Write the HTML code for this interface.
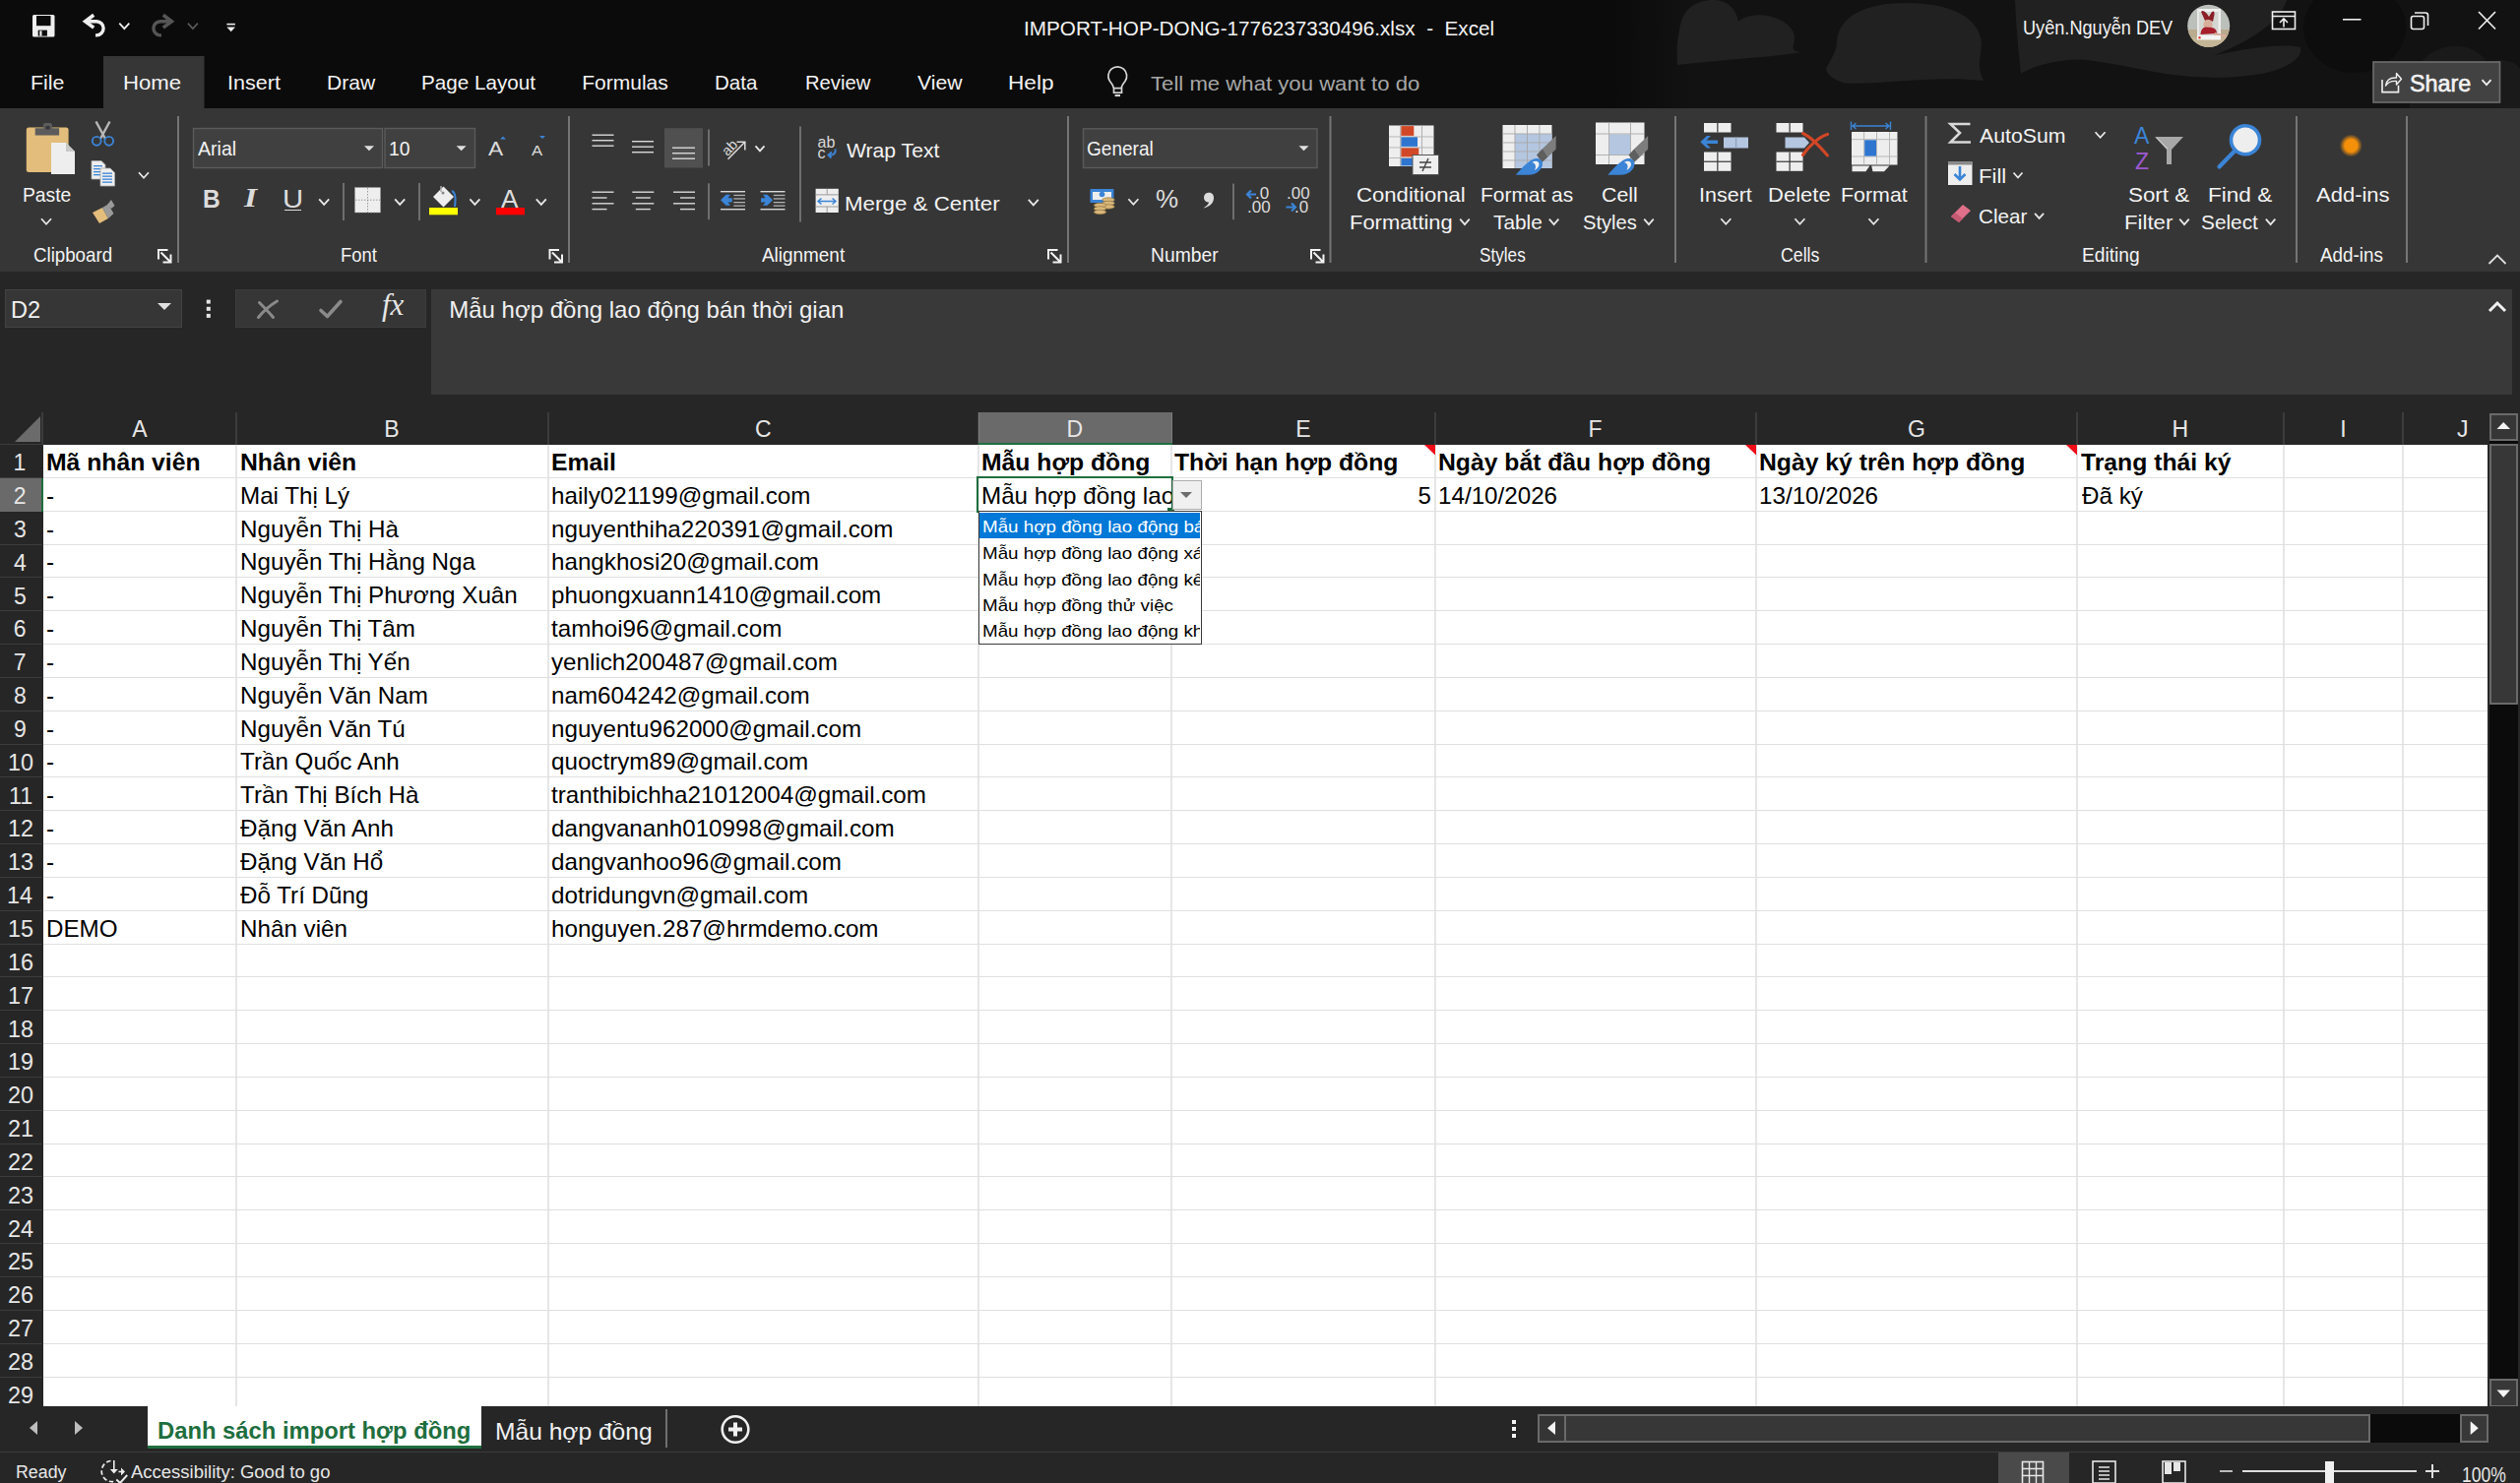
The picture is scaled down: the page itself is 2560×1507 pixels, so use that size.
<!DOCTYPE html>
<html><head><meta charset="utf-8"><style>
html,body{margin:0;padding:0}
body{width:2560px;height:1507px;overflow:hidden;position:relative;background:#0b0b0b;font-family:"Liberation Sans",sans-serif}
.r{position:absolute}
.t{position:absolute;white-space:pre}
</style></head><body>
<div class="r" style="left:0;top:0;width:2560px;height:110px;background:#0b0b0b;overflow:hidden"><svg class="r" style="left:0;top:0" width="2560" height="110"><defs><linearGradient id="nz" x1="0" x2="1" y1="0" y2="0"><stop offset="0" stop-color="#121212" stop-opacity="0"/><stop offset="1" stop-color="#121212"/></linearGradient></defs><rect x="1640" y="0" width="80" height="110" fill="url(#nz)"/><rect x="1720" y="0" width="840" height="110" fill="#121212"/><ellipse cx="2392" cy="28" rx="52" ry="46" fill="#0d0d0d"/><path d="M1704 66 C1703 50 1704 38 1706 32 C1708 10 1722 0 1740 0 C1756 0 1764 10 1766 22 C1772 16 1784 14 1796 16 C1814 20 1824 30 1823 40 C1822 48 1818 52 1830 53 C1800 58 1760 60 1704 66 Z" fill="#212121"/><path d="M1855 70 C1858 62 1866 54 1866 42 C1868 16 1896 3 1936 3 C1986 3 2012 20 2013 45 C2012 60 2008 66 2015 82 C1960 76 1900 88 1872 84 C1862 80 1856 76 1855 70 Z" fill="#212121"/><path d="M2047 0 L2323 0 C2318 20 2290 40 2250 56 C2290 48 2320 44 2337 48 C2340 60 2320 72 2290 76 C2260 80 2240 80 2200 75 C2160 68 2120 58 2100 61 C2075 64 2060 70 2053 75 C2050 50 2048 25 2047 0 Z" fill="#212121"/><path d="M2448 110 C2446 80 2456 58 2478 50 C2498 42 2520 50 2526 64 C2540 58 2556 62 2560 70 L2560 110 Z" fill="#1a1a1a"/><path d="M33 16.5 Q33 15 34.5 15 H54 Q55.5 15 55.5 16.5 V36 Q55.5 37.5 54 37.5 H34.5 Q33 37.5 33 36 Z" fill="#eeeeee"/><rect x="37" y="16" width="14.5" height="10.2" fill="#0b0b0b"/><rect x="38.7" y="30.6" width="9.2" height="6" fill="#0b0b0b"/><rect x="40.3" y="31.3" width="2.2" height="5.3" fill="#eeeeee"/><path d="M88 21.7 H98 A7.1 7.1 0 0 1 98 35.9 H97" stroke="#eeeeee" stroke-width="3.4" fill="none"/><path d="M95.2 15.3 L86.6 21.7 L95.2 28.1" stroke="#eeeeee" stroke-width="3.6" fill="none" stroke-linejoin="miter"/><path d="M121.3 23.65 L126.3 29.15 L131.3 23.65" stroke="#eeeeee" stroke-width="1.8" fill="none"/><path d="M173 21.7 H163 A7.1 7.1 0 0 0 163 35.9 H164" stroke="#555" stroke-width="3.4" fill="none"/><path d="M165.8 15.3 L174.4 21.7 L165.8 28.1" stroke="#555" stroke-width="3.6" fill="none" stroke-linejoin="miter"/><path d="M190.9 23.65 L195.9 29.15 L200.9 23.65" stroke="#555" stroke-width="1.8" fill="none"/><rect x="230.4" y="23.8" width="8.5" height="1.6" fill="#eeeeee"/><polygon points="230.4,27.6 239,27.6 234.7,32.3" fill="#eeeeee"/><rect x="2308.5" y="12" width="23" height="17.5" stroke="#eeeeee" stroke-width="1.6" fill="none"/><path d="M2308.5 16.5 H2331.5 M2320 27.5 V19.5 M2316 23 L2320 19 L2324 23" stroke="#eeeeee" stroke-width="1.6" fill="none"/><rect x="2380" y="19" width="18.5" height="1.6" fill="#eeeeee"/><rect x="2449.5" y="16.5" width="13" height="13" rx="2" stroke="#eeeeee" stroke-width="1.6" fill="none"/><path d="M2453 13 H2464 Q2466.5 13 2466.5 15.5 V26" stroke="#eeeeee" stroke-width="1.6" fill="none"/><path d="M2518 12 L2535 29.5 M2535 12 L2518 29.5" stroke="#eeeeee" stroke-width="1.7"/><defs><clipPath id="avc"><circle cx="2243.7" cy="26.3" r="21.5"/></clipPath></defs><g clip-path="url(#avc)"><rect x="2220" y="3" width="48" height="48" fill="#bcc0ba"/><rect x="2220" y="30" width="48" height="20" fill="#b9ab8e"/><rect x="2220" y="38" width="48" height="12" fill="#c4b596"/><rect x="2232" y="9" width="24" height="31" fill="#d4d6d2"/><rect x="2232" y="9" width="24" height="3" fill="#f0f0f0"/><rect x="2253.5" y="9" width="2.5" height="31" fill="#eeeeee"/><rect x="2232" y="9" width="2" height="31" fill="#e8e8e8"/><path d="M2236 12 Q2238 9 2242 14 L2244 17 L2247 12 Q2250 10 2249.5 15 L2248 22 Q2244 19 2240 21 Z" fill="#8a1f28"/><ellipse cx="2243" cy="25" rx="4.6" ry="5" fill="#d8ae9b"/><path d="M2235.5 35 Q2236 27.5 2241 27.5 L2247 28 Q2252 29 2252 34 Z" fill="#a61e2a"/><path d="M2250 33 L2263 36 L2262 38 L2249 36 Z" fill="#d8ae9b"/><rect x="2232" y="36" width="24" height="4.5" fill="#f4f4f4"/><circle cx="2234.5" cy="38.3" r="1.2" fill="#e04030"/></g><path d="M1131.3 89.3 C1130.5 85.5 1129 84.5 1127.5 82.5 A9.4 9.4 0 1 1 1143 82.5 C1141.5 84.5 1140 85.5 1139.2 89.3" stroke="#d6d6d6" stroke-width="1.7" fill="none"/><rect x="1131.5" y="89.6" width="8" height="4.6" stroke="#d6d6d6" stroke-width="1.7" fill="none"/><rect x="1132.6" y="96" width="5.4" height="2.1" fill="#d6d6d6"/><rect x="2411" y="63" width="128.5" height="41" fill="#424242" stroke="#6e6e6e" stroke-width="1.6"/><path d="M2420 81 V93.6 H2436.5 V86.7" stroke="#f0f0f0" stroke-width="1.6" fill="none"/><path d="M2423.5 87 C2424.5 81 2429 78.5 2434.5 79 V74.5 L2439.5 80.2 L2434.5 86 V82.5 C2430 82 2426 83.5 2423.5 87 Z" stroke="#f0f0f0" stroke-width="1.4" fill="none" stroke-linejoin="round"/><path d="M2521.5 81.1 L2526 86.1 L2530.5 81.1" stroke="#f0f0f0" stroke-width="1.8" fill="none"/><rect x="105" y="57" width="102.5" height="53" fill="#363636"/></svg><div class="t" style="left:1040.14px;top:14.60px;font-size:21px;line-height:27px;color:#f3f3f3;transform:scaleX(0.9856);transform-origin:0 0;">IMPORT-HOP-DONG-1776237330496.xlsx  -  Excel</div><div class="t" style="left:2055.34px;top:13.50px;font-size:21px;line-height:27px;color:#f3f3f3;transform:scaleX(0.8636);transform-origin:0 0;">Uyên.Nguyễn DEV</div><div class="t" style="left:30.79px;top:70.30px;font-size:21px;line-height:27px;color:#f3f3f3;transform:scaleX(1.0163);transform-origin:0 0;">File</div><div class="t" style="left:125.23px;top:70.30px;font-size:21px;line-height:27px;color:#f3f3f3;transform:scaleX(1.0553);transform-origin:0 0;">Home</div><div class="t" style="left:231.16px;top:70.30px;font-size:21px;line-height:27px;color:#f3f3f3;transform:scaleX(1.0255);transform-origin:0 0;">Insert</div><div class="t" style="left:331.81px;top:70.30px;font-size:21px;line-height:27px;color:#f3f3f3;transform:scaleX(1.0031);transform-origin:0 0;">Draw</div><div class="t" style="left:428.05px;top:70.30px;font-size:21px;line-height:27px;color:#f3f3f3;transform:scaleX(0.9834);transform-origin:0 0;">Page Layout</div><div class="t" style="left:591.22px;top:70.30px;font-size:21px;line-height:27px;color:#f3f3f3;">Formulas</div><div class="t" style="left:726.16px;top:70.30px;font-size:21px;line-height:27px;color:#f3f3f3;transform:scaleX(0.9781);transform-origin:0 0;">Data</div><div class="t" style="left:817.68px;top:70.30px;font-size:21px;line-height:27px;color:#f3f3f3;transform:scaleX(0.9628);transform-origin:0 0;">Review</div><div class="t" style="left:932.20px;top:70.30px;font-size:21px;line-height:27px;color:#f3f3f3;transform:scaleX(1.0100);transform-origin:0 0;">View</div><div class="t" style="left:1024.39px;top:70.30px;font-size:21px;line-height:27px;color:#f3f3f3;transform:scaleX(1.0779);transform-origin:0 0;">Help</div><div class="t" style="left:1168.56px;top:70.60px;font-size:21px;line-height:27px;color:#a6a6a6;transform:scaleX(1.0548);transform-origin:0 0;">Tell me what you want to do</div><div class="t" style="left:2447.55px;top:68.80px;font-size:24px;line-height:31px;color:#f3f3f3;transform:scaleX(0.9738);transform-origin:0 0;-webkit-text-stroke:0.6px #f3f3f3;">Share</div></div>
<div class="r" style="left:0;top:110px;width:2560px;height:166px;background:#363636"></div><svg class="r" style="left:0;top:0" width="2560" height="280"><rect x="180" y="118" width="2" height="149" fill="#757575"/><rect x="577" y="118" width="2" height="149" fill="#757575"/><rect x="1084" y="118" width="2" height="149" fill="#757575"/><rect x="1350.5" y="118" width="2" height="149" fill="#757575"/><rect x="1701" y="118" width="2" height="149" fill="#757575"/><rect x="1955.5" y="118" width="2" height="149" fill="#757575"/><rect x="2332" y="118" width="2" height="149" fill="#757575"/><rect x="2444" y="118" width="2" height="149" fill="#757575"/><path d="M161 263.5 V254 H170.5" stroke="#f2f2f2" stroke-width="2" fill="none"/><path d="M163.5 256.5 L173 266 M173.5 258.5 V266.5 H165.5" stroke="#f2f2f2" stroke-width="2" fill="none"/><path d="M558.5 263.5 V254 H568.0" stroke="#f2f2f2" stroke-width="2" fill="none"/><path d="M561.0 256.5 L570.5 266 M571.0 258.5 V266.5 H563.0" stroke="#f2f2f2" stroke-width="2" fill="none"/><path d="M1065 263.5 V254 H1074.5" stroke="#f2f2f2" stroke-width="2" fill="none"/><path d="M1067.5 256.5 L1077 266 M1077.5 258.5 V266.5 H1069.5" stroke="#f2f2f2" stroke-width="2" fill="none"/><path d="M1332 263.5 V254 H1341.5" stroke="#f2f2f2" stroke-width="2" fill="none"/><path d="M1334.5 256.5 L1344 266 M1344.5 258.5 V266.5 H1336.5" stroke="#f2f2f2" stroke-width="2" fill="none"/><path d="M2528.5 268 L2537 259.5 L2545.5 268" stroke="#e0e0e0" stroke-width="1.8" fill="none"/><rect x="26.8" y="129.6" width="42.8" height="45.3" rx="2.5" fill="#e3bd7b"/><path d="M35.7 130.2 H44 V127 Q44 125 46 125 H51 Q53 125 53 127 V130.2 H60.1 V137.4 H35.7 Z" fill="#5c5c5c"/><rect x="46.5" y="128" width="4" height="3.5" fill="#363636"/><path d="M52 145 H67 L76 154 V177 H52 Z" fill="#eeeeee"/><path d="M67 145 V154 H76" fill="#c8c8c8"/><path d="M42.0 222.25 L47 227.75 L52.0 222.25" stroke="#e8e8e8" stroke-width="1.8" fill="none"/><path d="M97.5 123.5 L107 141 M111.5 123.5 L102 141" stroke="#b8b8b8" stroke-width="2.4"/><circle cx="98.2" cy="143.3" r="4.4" stroke="#3b84d6" stroke-width="1.9" fill="none"/><circle cx="110.7" cy="143.3" r="4.4" stroke="#3b84d6" stroke-width="1.9" fill="none"/><path d="M93 163.5 H103 L107 167.5 V182 H93 Z" fill="#eeeeee" stroke="#aaa" stroke-width="0.8"/><rect x="95" y="168" width="9" height="1.3" fill="#3b84d6"/><rect x="95" y="171" width="9" height="1.3" fill="#3b84d6"/><rect x="95" y="174" width="9" height="1.3" fill="#3b84d6"/><rect x="95" y="177" width="9" height="1.3" fill="#3b84d6"/><path d="M102 171 H112 L116.5 175.5 V189 H102 Z" fill="#eeeeee" stroke="#aaa" stroke-width="0.8"/><rect x="104" y="175.5" width="10" height="1.3" fill="#3b84d6"/><rect x="104" y="178.5" width="10" height="1.3" fill="#3b84d6"/><rect x="104" y="181.5" width="10" height="1.3" fill="#3b84d6"/><rect x="104" y="184.5" width="10" height="1.3" fill="#3b84d6"/><path d="M141.0 175.25 L146 180.75 L151.0 175.25" stroke="#e8e8e8" stroke-width="1.8" fill="none"/><polygon points="94,216 104,211 110,222 101,227" fill="#e3bd7b"/><polygon points="104,211 110,207.5 115.5,217 110,222" fill="#9a9a9a"/><polygon points="109,208 113,203 116.5,209 113,212" fill="#9a9a9a"/><rect x="196.5" y="130.5" width="192" height="40" fill="#404040" stroke="#5a5a5a" stroke-width="1.4"/><rect x="391" y="130.5" width="91.5" height="40" fill="#404040" stroke="#5a5a5a" stroke-width="1.4"/><polygon points="370.0,148.3 380.0,148.3 375,153.3" fill="#e0e0e0"/><polygon points="463.6,148.3 473.6,148.3 468.6,153.3" fill="#e0e0e0"/><polygon points="508,141.5 511,138.5 514,141.5" fill="#3b84d6"/><polygon points="548,138 554,138 551,141" fill="#3b84d6"/><path d="M324.2 202.45 L329.2 207.95 L334.2 202.45" stroke="#e8e8e8" stroke-width="1.8" fill="none"/><rect x="348" y="186" width="2" height="38" fill="#6e6e6e"/><rect x="360.5" y="190.5" width="26" height="25.5" fill="#eeeeee"/><path d="M373.5 191 V216 M361 203.2 H386" stroke="#888" stroke-width="0.8" stroke-dasharray="1.5 1.5"/><rect x="360.5" y="190.5" width="26" height="25.5" fill="none" stroke="#999" stroke-width="0.8" stroke-dasharray="1.5 1.5"/><path d="M401.2 202.45 L406.2 207.95 L411.2 202.45" stroke="#e8e8e8" stroke-width="1.8" fill="none"/><rect x="425" y="186" width="2" height="38" fill="#6e6e6e"/><polygon points="440,200 450.5,189.5 461,200 450.5,210.5" fill="#eeeeee"/><path d="M448 189 V195" stroke="#aaa" stroke-width="1.5"/><circle cx="450" cy="196" r="1.5" fill="#888"/><path d="M459 194 Q464 196 462 210" stroke="#3b84d6" stroke-width="2" fill="none"/><rect x="436" y="211" width="29" height="7.3" fill="#ffff00"/><path d="M477.4 202.45 L482.4 207.95 L487.4 202.45" stroke="#e8e8e8" stroke-width="1.8" fill="none"/><rect x="504" y="211" width="29" height="7.3" fill="#ff0000"/><path d="M544.8 202.45 L549.8 207.95 L554.8 202.45" stroke="#e8e8e8" stroke-width="1.8" fill="none"/><rect x="601.5" y="136.5" width="22" height="1.4" fill="#d8d8d8"/><rect x="601.5" y="142.0" width="22" height="1.4" fill="#d8d8d8"/><rect x="601.5" y="147.5" width="22" height="1.4" fill="#d8d8d8"/><rect x="642" y="143.0" width="22" height="1.4" fill="#d8d8d8"/><rect x="642" y="148.5" width="22" height="1.4" fill="#d8d8d8"/><rect x="642" y="154.0" width="22" height="1.4" fill="#d8d8d8"/><rect x="675" y="130.2" width="39" height="40.3" fill="#505050"/><rect x="683" y="149.5" width="23" height="1.4" fill="#d8d8d8"/><rect x="683" y="155.0" width="23" height="1.4" fill="#d8d8d8"/><rect x="683" y="160.5" width="23" height="1.4" fill="#d8d8d8"/><rect x="719" y="131.5" width="2" height="37.0" fill="#6e6e6e"/><text x="733" y="155" font-family="Liberation Sans" font-size="14.5" fill="#dcdcdc" transform="rotate(-45 741 150)">ab</text><path d="M739.5 161.7 L756.5 144.5 M748.5 144.2 H756.8 V152.5" stroke="#dcdcdc" stroke-width="1.5" fill="none"/><path d="M767.5 148.3 L772 153.3 L776.5 148.3" stroke="#e8e8e8" stroke-width="1.8" fill="none"/><rect x="812" y="128.5" width="2" height="97.0" fill="#6e6e6e"/><rect x="601.5" y="194.5" width="22" height="1.4" fill="#d8d8d8"/><rect x="642.3" y="194.5" width="22" height="1.4" fill="#d8d8d8"/><rect x="684" y="194.5" width="22" height="1.4" fill="#d8d8d8"/><rect x="601.5" y="200.3" width="15" height="1.4" fill="#d8d8d8"/><rect x="645.8" y="200.3" width="15" height="1.4" fill="#d8d8d8"/><rect x="691" y="200.3" width="15" height="1.4" fill="#d8d8d8"/><rect x="601.5" y="206.1" width="22" height="1.4" fill="#d8d8d8"/><rect x="642.3" y="206.1" width="22" height="1.4" fill="#d8d8d8"/><rect x="684" y="206.1" width="22" height="1.4" fill="#d8d8d8"/><rect x="601.5" y="211.9" width="15" height="1.4" fill="#d8d8d8"/><rect x="645.8" y="211.9" width="15" height="1.4" fill="#d8d8d8"/><rect x="691" y="211.9" width="15" height="1.4" fill="#d8d8d8"/><rect x="719" y="186.3" width="2" height="36.89999999999998" fill="#6e6e6e"/><rect x="732" y="194" width="25" height="1.4" fill="#d8d8d8"/><rect x="732" y="212" width="25" height="1.4" fill="#d8d8d8"/><rect x="745.3" y="197.8" width="11.7" height="1.3" fill="#b0b0b0"/><rect x="745.3" y="201.3" width="11.7" height="1.3" fill="#b0b0b0"/><rect x="745.3" y="205" width="11.7" height="1.3" fill="#b0b0b0"/><rect x="745.3" y="208.5" width="11.7" height="1.3" fill="#b0b0b0"/><rect x="772.5" y="194" width="25" height="1.4" fill="#d8d8d8"/><rect x="772.5" y="212" width="25" height="1.4" fill="#d8d8d8"/><rect x="785.8" y="197.8" width="11.7" height="1.3" fill="#b0b0b0"/><rect x="785.8" y="201.3" width="11.7" height="1.3" fill="#b0b0b0"/><rect x="785.8" y="205" width="11.7" height="1.3" fill="#b0b0b0"/><rect x="785.8" y="208.5" width="11.7" height="1.3" fill="#b0b0b0"/><polygon points="732,203.3 737.5,197.8 742,197.8 739.5,201.2 743.8,201.2 743.8,205.5 739.5,205.5 742,208.8 737.5,208.8" fill="#3b84d6"/><polygon points="785,203.3 779.5,197.8 775,197.8 777.5,201.2 773,201.2 773,205.5 777.5,205.5 775,208.8 779.5,208.8" fill="#3b84d6"/><text x="830.5" y="149.6" font-family="Liberation Sans" font-size="16" fill="#d8d8d8">ab</text><text x="830.5" y="160.6" font-family="Liberation Sans" font-size="16" fill="#d8d8d8">c</text><path d="M848.5 151.5 C849.5 156 846 158.5 842 157.5 M845 154.5 L841.5 157.5 L844.5 160.5" stroke="#3b84d6" stroke-width="1.9" fill="none"/><rect x="828.6" y="191.8" width="23.2" height="24.2" fill="#eeeeee"/><path d="M828.6 197.9 H851.8 M828.6 210 H851.8 M840.2 191.8 V197.9 M840.2 210 V216" stroke="#9a9a9a" stroke-width="1"/><path d="M831 204.5 H849 M834.5 201.5 L831 204.5 L834.5 207.5 M845.5 201.5 L849 204.5 L845.5 207.5" stroke="#3b84d6" stroke-width="1.5" fill="none"/><path d="M1044.8 202.95 L1049.8 208.45 L1054.8 202.95" stroke="#e8e8e8" stroke-width="1.8" fill="none"/><rect x="1100.5" y="130.8" width="237.5" height="39.7" fill="#404040" stroke="#5a5a5a" stroke-width="1.4"/><polygon points="1319.5,148.3 1329.5,148.3 1324.5,153.3" fill="#e0e0e0"/><rect x="1107.5" y="192" width="24" height="14" fill="#3b84d6"/><rect x="1110" y="195" width="19" height="8" fill="#eeeeee"/><circle cx="1119.5" cy="197.5" r="2.8" fill="#3b84d6"/><ellipse cx="1126" cy="203" rx="6.3" ry="2.2" fill="#d9b77a" stroke="#8a6d3b" stroke-width="0.6"/><ellipse cx="1126" cy="206.5" rx="6.3" ry="2.2" fill="#d9b77a" stroke="#8a6d3b" stroke-width="0.6"/><ellipse cx="1126" cy="210" rx="6.3" ry="2.2" fill="#d9b77a" stroke="#8a6d3b" stroke-width="0.6"/><ellipse cx="1117.5" cy="208.5" rx="6.3" ry="2.2" fill="#d9b77a" stroke="#8a6d3b" stroke-width="0.6"/><ellipse cx="1117.5" cy="212" rx="6.3" ry="2.2" fill="#d9b77a" stroke="#8a6d3b" stroke-width="0.6"/><ellipse cx="1117.5" cy="215.5" rx="6.3" ry="2.2" fill="#d9b77a" stroke="#8a6d3b" stroke-width="0.6"/><path d="M1146.4 202.25 L1151.4 207.75 L1156.4 202.25" stroke="#e8e8e8" stroke-width="1.8" fill="none"/><rect x="1252" y="186.6" width="2" height="36.599999999999994" fill="#6e6e6e"/><path d="M1276 197.5 H1267 M1271 193.5 L1267 197.5 L1271 201.5" stroke="#3b84d6" stroke-width="2.2" fill="none"/><path d="M1306.5 210.5 H1316 M1312 206.5 L1316 210.5 L1312 214.5" stroke="#3b84d6" stroke-width="2.2" fill="none"/><rect x="1411" y="127.5" width="45.5" height="41.5" fill="#eeeeee"/><rect x="1423.3" y="128.1" width="13" height="9.8" fill="#d24726"/><rect x="1423.3" y="139.1" width="16.7" height="9.8" fill="#2e75d0"/><rect x="1423.3" y="150.1" width="18" height="9.3" fill="#d24726"/><rect x="1423.3" y="160.6" width="12" height="7.8" fill="#2e75d0"/><rect x="1422.2" y="127.5" width="1" height="41.5" fill="#b0b0b0"/><rect x="1444" y="127.5" width="1" height="41.5" fill="#b0b0b0"/><rect x="1411" y="138.5" width="45.5" height="0.9" fill="#b0b0b0"/><rect x="1411" y="149.5" width="45.5" height="0.9" fill="#b0b0b0"/><rect x="1411" y="160" width="45.5" height="0.9" fill="#b0b0b0"/><rect x="1435" y="157.5" width="26.5" height="20" fill="#eeeeee" stroke="#555" stroke-width="1"/><path d="M1442 165 H1454 M1442 170 H1454 M1451 161 L1445 174" stroke="#444" stroke-width="1.4"/><rect x="1526.5" y="127" width="50" height="44" fill="#eeeeee"/><rect x="1539" y="136" width="37.5" height="35" fill="#b4c6e0"/><rect x="1538.5" y="127" width="0.9" height="44" fill="#a8a8a8"/><rect x="1551" y="127" width="0.9" height="44" fill="#a8a8a8"/><rect x="1563.5" y="127" width="0.9" height="44" fill="#a8a8a8"/><rect x="1526.5" y="135.5" width="50" height="0.9" fill="#a8a8a8"/><rect x="1526.5" y="144.5" width="50" height="0.9" fill="#a8a8a8"/><rect x="1526.5" y="153.5" width="50" height="0.9" fill="#a8a8a8"/><rect x="1526.5" y="162.5" width="50" height="0.9" fill="#a8a8a8"/><g transform="translate(0 0)"><polygon points="1567,151 1580.7,138.1 1580.7,151.5 1572.5,159.5" fill="#7d7d7d"/><polygon points="1561,157.5 1567,151 1572.5,159.5 1566.5,165" fill="#5f5f5f"/><path d="M1539.8 177.8 C1545 172 1551 165 1557 162 C1562 159.5 1567.5 162 1567 167 C1566.5 173 1560 177.8 1553 177.8 Z" fill="#3b84d6"/><path d="M1556.5 165 C1560 162.5 1564 164 1563.5 167.5 C1563 170 1561 172 1559 173 C1561 169 1560 166 1556.5 165 Z" fill="#f0f0f0"/></g><rect x="1621" y="124.5" width="49.5" height="42.5" fill="#eeeeee"/><rect x="1635" y="136.5" width="21" height="20.5" fill="#b4c6e0"/><path d="M1634.5 124.5 V167 M1656.5 124.5 V167 M1621 136 H1670.5 M1621 157.5 H1670.5" stroke="#a8a8a8" stroke-width="0.9"/><g transform="translate(93.5 0)"><polygon points="1567,151 1580.7,138.1 1580.7,151.5 1572.5,159.5" fill="#7d7d7d"/><polygon points="1561,157.5 1567,151 1572.5,159.5 1566.5,165" fill="#5f5f5f"/><path d="M1539.8 177.8 C1545 172 1551 165 1557 162 C1562 159.5 1567.5 162 1567 167 C1566.5 173 1560 177.8 1553 177.8 Z" fill="#3b84d6"/><path d="M1556.5 165 C1560 162.5 1564 164 1563.5 167.5 C1563 170 1561 172 1559 173 C1561 169 1560 166 1556.5 165 Z" fill="#f0f0f0"/></g><rect x="1731" y="125" width="27.5" height="9.5" fill="#eeeeee"/><rect x="1744.25" y="125" width="1.2" height="9.5" fill="#363636"/><rect x="1731" y="154.5" width="27.5" height="19.3" fill="#eeeeee"/><rect x="1744.25" y="154.5" width="1.2" height="19.3" fill="#363636"/><rect x="1731" y="163.65" width="27.5" height="1.2" fill="#363636"/><rect x="1751" y="139.5" width="25" height="11" fill="#b4c6e0"/><rect x="1763" y="139.5" width="1.2" height="11" fill="#8aa0c0"/><polygon points="1727.3,144.2 1734,138 1738,138 1733.5,142.5 1745,142.5 1745,146 1733.5,146 1738,150.5 1734,150.5" fill="#3b84d6"/><rect x="1804.5" y="125" width="27" height="9.5" fill="#eeeeee"/><rect x="1817.5" y="125" width="1.2" height="9.5" fill="#363636"/><rect x="1804.5" y="154.5" width="27" height="19.3" fill="#eeeeee"/><rect x="1817.5" y="154.5" width="1.2" height="19.3" fill="#363636"/><rect x="1804.5" y="163.65" width="27" height="1.2" fill="#363636"/><polygon points="1813.5,139.5 1833,139.5 1838,145 1833,150.5 1813.5,150.5" fill="#b4c6e0"/><path d="M1831.5 135.5 C1840 139 1848 148 1856.5 158" stroke="#d24726" stroke-width="3" fill="none" stroke-linecap="round"/><path d="M1856.5 136.5 C1848 139 1838 148 1831.5 157.5" stroke="#d24726" stroke-width="3.2" fill="none" stroke-linecap="round"/><path d="M1882 128 H1919 M1885.5 125 L1882 128 L1885.5 131 M1915.5 125 L1919 128 L1915.5 131 M1880.5 123.5 V132 M1920.5 123.5 V132" stroke="#3b84d6" stroke-width="1.4" fill="none"/><rect x="1881" y="134" width="46.5" height="33.5" fill="#eeeeee"/><polygon points="1881.5,168.5 1899.4,168.5 1895.4,174.3 1881.5,174.3" fill="#eeeeee"/><polygon points="1901.2,168.5 1919.5,168.5 1914.1,174.3 1902.5,174.3" fill="#eeeeee"/><path d="M1893.6 134 V167.5 M1906.5 134 V167.5 M1919.5 134 V167.5 M1881 141.7 H1927.5 M1881 159 H1927.5" stroke="#b0b0b0" stroke-width="0.9"/><rect x="1894.2" y="142.3" width="11.8" height="16.3" fill="#2e75d0"/><path d="M1748.3 222.25 L1753.3 227.75 L1758.3 222.25" stroke="#e8e8e8" stroke-width="1.8" fill="none"/><path d="M1823.4 222.25 L1828.4 227.75 L1833.4 222.25" stroke="#e8e8e8" stroke-width="1.8" fill="none"/><path d="M1898.4 222.25 L1903.4 227.75 L1908.4 222.25" stroke="#e8e8e8" stroke-width="1.8" fill="none"/><path d="M2001.5 126 H1981.5 L1991 135 L1981.5 144.5 H2002" stroke="#d8d8d8" stroke-width="2.6" fill="none"/><path d="M2128.6 134.25 L2133.6 139.75 L2138.6 134.25" stroke="#e8e8e8" stroke-width="1.8" fill="none"/><rect x="1979" y="164.5" width="24.5" height="23.5" fill="#eeeeee"/><rect x="1979" y="164.5" width="24.5" height="3" fill="#8a8a8a"/><path d="M1991 169 V182 M1985.5 177 L1991 182.5 L1996.5 177" stroke="#3b84d6" stroke-width="2.6" fill="none"/><path d="M2045.5 175.5 L2050 180.5 L2054.5 175.5" stroke="#e8e8e8" stroke-width="1.8" fill="none"/><polygon points="1982,220 1994,208 2002,214 1990,226" fill="#e0708a"/><polygon points="1982,220 1986,216 1994,222 1990,226" fill="#c55a72"/><path d="M2067.1 216.8 L2071.6 221.8 L2076.1 216.8" stroke="#e8e8e8" stroke-width="1.8" fill="none"/><text x="2168" y="145.5" font-family="Liberation Sans" font-size="23" fill="#3b84d6">A</text><text x="2169" y="171.8" font-family="Liberation Sans" font-size="23" fill="#9b59d0">Z</text><path d="M2189 139 H2218 L2206 152 V167 H2201 V152 Z" fill="#a8a8a8"/><path d="M2191 140 L2202 151" stroke="#e0e0e0" stroke-width="0.8"/><circle cx="2281" cy="142.3" r="14.5" fill="#eeeeee" stroke="#3b84d6" stroke-width="3.6"/><path d="M2270.5 153 L2254.5 169.5" stroke="#3b84d6" stroke-width="4.2" stroke-linecap="round"/><defs><radialGradient id="og"><stop offset="0.55" stop-color="#f5900a"/><stop offset="1" stop-color="#f5900a" stop-opacity="0"/></radialGradient></defs><circle cx="2388.3" cy="148" r="11.5" fill="url(#og)"/></svg><div class="t" style="left:22.86px;top:183.90px;font-size:21px;line-height:27px;color:#f3f3f3;transform:scaleX(0.9191);transform-origin:0 0;">Paste</div><div class="t" style="left:33.56px;top:245.00px;font-size:21px;line-height:27px;color:#f3f3f3;transform:scaleX(0.8907);transform-origin:0 0;">Clipboard</div><div class="t" style="left:200.60px;top:136.60px;font-size:21px;line-height:27px;color:#f3f3f3;transform:scaleX(0.9303);transform-origin:0 0;">Arial</div><div class="t" style="left:395.25px;top:136.60px;font-size:21px;line-height:27px;color:#f3f3f3;transform:scaleX(0.9190);transform-origin:0 0;">10</div><div class="t" style="left:495.90px;top:137.40px;font-size:21px;line-height:27px;color:#dcdcdc;transform:scaleX(1.0813);transform-origin:0 0;">A</div><div class="t" style="left:539.50px;top:142.90px;font-size:15px;line-height:20px;color:#dcdcdc;transform:scaleX(1.1128);transform-origin:0 0;">A</div><div class="t" style="left:206.20px;top:184.80px;font-size:26px;line-height:34px;color:#dcdcdc;font-weight:bold;transform:scaleX(0.9443);transform-origin:0 0;">B</div><div class="t" style="left:248px;top:185px;font-size:28px;line-height:32px;color:#dcdcdc;font-family:'Liberation Serif',serif;font-style:italic;font-weight:bold;transform:scaleX(1.2);transform-origin:0 0">I</div><div class="t" style="left:286.50px;top:185.80px;font-size:25px;line-height:32px;color:#dcdcdc;transform:scaleX(1.1719);transform-origin:0 0;">U</div><div class="r" style="left:288.5px;top:212.5px;width:17px;height:1.5px;background:#dcdcdc"></div><div class="t" style="left:508.60px;top:185.80px;font-size:25px;line-height:32px;color:#dcdcdc;transform:scaleX(1.0466);transform-origin:0 0;">A</div><div class="t" style="left:346.02px;top:245.30px;font-size:21px;line-height:27px;color:#f3f3f3;transform:scaleX(0.8780);transform-origin:0 0;">Font</div><div class="t" style="left:860.00px;top:138.70px;font-size:21px;line-height:27px;color:#f3f3f3;transform:scaleX(1.0068);transform-origin:0 0;">Wrap Text</div><div class="t" style="left:858.21px;top:192.70px;font-size:21px;line-height:27px;color:#f3f3f3;transform:scaleX(1.0638);transform-origin:0 0;">Merge &amp; Center</div><div class="t" style="left:774.30px;top:245.00px;font-size:21px;line-height:27px;color:#f3f3f3;transform:scaleX(0.9010);transform-origin:0 0;">Alignment</div><div class="t" style="left:1103.75px;top:136.70px;font-size:21px;line-height:27px;color:#f3f3f3;transform:scaleX(0.9068);transform-origin:0 0;">General</div><div class="t" style="left:1174px;top:186px;font-size:26px;line-height:32px;color:#dcdcdc">%</div><svg class="r" style="left:1219px;top:194px" width="18" height="20"><path d="M7.5 2 C12 1 14.5 4 14 8 C13.5 13 9 16.5 3.5 17.5 C7 15 9 13 9 11.5 C6 11.5 4 9.5 4 7 C4 4 5.5 2.5 7.5 2 Z" fill="#dcdcdc"/></svg><div class="t" style="left:1275px;top:187px;font-size:17px;line-height:20px;color:#dcdcdc">.0</div><div class="t" style="left:1267px;top:201px;font-size:17px;line-height:20px;color:#dcdcdc">.00</div><div class="t" style="left:1307px;top:187px;font-size:17px;line-height:20px;color:#dcdcdc">.00</div><div class="t" style="left:1315px;top:201px;font-size:17px;line-height:20px;color:#dcdcdc">.0</div><div class="t" style="left:1169.46px;top:245.00px;font-size:21px;line-height:27px;color:#f3f3f3;transform:scaleX(0.9180);transform-origin:0 0;">Number</div><div class="t" style="left:1378.29px;top:183.60px;font-size:21px;line-height:27px;color:#f3f3f3;transform:scaleX(1.0537);transform-origin:0 0;">Conditional</div><div class="t" style="left:1371.05px;top:211.90px;font-size:21px;line-height:27px;color:#f3f3f3;transform:scaleX(1.0437);transform-origin:0 0;">Formatting</div><div class="t" style="left:1504.33px;top:183.60px;font-size:21px;line-height:27px;color:#f3f3f3;transform:scaleX(0.9969);transform-origin:0 0;">Format as</div><div class="t" style="left:1516.58px;top:211.90px;font-size:21px;line-height:27px;color:#f3f3f3;transform:scaleX(0.9912);transform-origin:0 0;">Table</div><div class="t" style="left:1626.83px;top:183.60px;font-size:21px;line-height:27px;color:#f3f3f3;transform:scaleX(1.0175);transform-origin:0 0;">Cell</div><div class="t" style="left:1607.79px;top:211.90px;font-size:21px;line-height:27px;color:#f3f3f3;transform:scaleX(0.9596);transform-origin:0 0;">Styles</div><div class="t" style="left:1502.83px;top:245.00px;font-size:21px;line-height:27px;color:#f3f3f3;transform:scaleX(0.8174);transform-origin:0 0;">Styles</div><div class="t" style="left:1726.27px;top:183.60px;font-size:21px;line-height:27px;color:#f3f3f3;transform:scaleX(1.0235);transform-origin:0 0;">Insert</div><div class="t" style="left:1796.24px;top:183.60px;font-size:21px;line-height:27px;color:#f3f3f3;transform:scaleX(1.0487);transform-origin:0 0;">Delete</div><div class="t" style="left:1869.69px;top:183.60px;font-size:21px;line-height:27px;color:#f3f3f3;transform:scaleX(1.0188);transform-origin:0 0;">Format</div><div class="t" style="left:1808.51px;top:245.00px;font-size:21px;line-height:27px;color:#f3f3f3;transform:scaleX(0.8433);transform-origin:0 0;">Cells</div><div class="t" style="left:2011.30px;top:124.00px;font-size:21px;line-height:27px;color:#f3f3f3;transform:scaleX(1.0135);transform-origin:0 0;">AutoSum</div><div class="t" style="left:2009.53px;top:165.00px;font-size:21px;line-height:27px;color:#f3f3f3;transform:scaleX(1.0531);transform-origin:0 0;">Fill</div><div class="t" style="left:2010.27px;top:206.40px;font-size:21px;line-height:27px;color:#f3f3f3;transform:scaleX(0.9831);transform-origin:0 0;">Clear</div><div class="t" style="left:2162.39px;top:183.60px;font-size:21px;line-height:27px;color:#f3f3f3;transform:scaleX(1.0644);transform-origin:0 0;">Sort &amp;</div><div class="t" style="left:2157.92px;top:211.90px;font-size:21px;line-height:27px;color:#f3f3f3;transform:scaleX(1.0575);transform-origin:0 0;">Filter</div><div class="t" style="left:2242.79px;top:183.60px;font-size:21px;line-height:27px;color:#f3f3f3;transform:scaleX(1.0748);transform-origin:0 0;">Find &amp;</div><div class="t" style="left:2236.26px;top:211.90px;font-size:21px;line-height:27px;color:#f3f3f3;transform:scaleX(0.9908);transform-origin:0 0;">Select</div><div class="t" style="left:2115.07px;top:245.00px;font-size:21px;line-height:27px;color:#f3f3f3;transform:scaleX(0.9132);transform-origin:0 0;">Editing</div><div class="t" style="left:2352.80px;top:183.60px;font-size:21px;line-height:27px;color:#f3f3f3;transform:scaleX(1.0475);transform-origin:0 0;">Add-ins</div><div class="t" style="left:2357.00px;top:245.00px;font-size:21px;line-height:27px;color:#f3f3f3;transform:scaleX(0.8984);transform-origin:0 0;">Add-ins</div><svg class="r" style="left:0;top:0" width="2560" height="280"><path d="M1483.25 222.55 L1488 228.05 L1492.75 222.55" stroke="#e8e8e8" stroke-width="1.8" fill="none"/><path d="M1573.85 222.55 L1578.6 228.05 L1583.35 222.55" stroke="#e8e8e8" stroke-width="1.8" fill="none"/><path d="M1670.25 222.55 L1675 228.05 L1679.75 222.55" stroke="#e8e8e8" stroke-width="1.8" fill="none"/><path d="M2214.25 222.55 L2219 228.05 L2223.75 222.55" stroke="#e8e8e8" stroke-width="1.8" fill="none"/><path d="M2301.85 222.55 L2306.6 228.05 L2311.35 222.55" stroke="#e8e8e8" stroke-width="1.8" fill="none"/></svg>
<div class="r" style="left:0;top:276px;width:2560px;height:1231px;background:#262626"></div><div class="r" style="left:44px;top:452px;width:2483px;height:977px;background:#fff"></div><svg class="r" style="left:0;top:0" width="2560" height="1507"><rect x="239" y="452" width="2" height="977" fill="#e6e6e6"/><rect x="556" y="452" width="2" height="977" fill="#e6e6e6"/><rect x="993" y="452" width="2" height="977" fill="#e6e6e6"/><rect x="1189" y="452" width="2" height="977" fill="#e6e6e6"/><rect x="1457" y="452" width="2" height="977" fill="#e6e6e6"/><rect x="1783" y="452" width="2" height="977" fill="#e6e6e6"/><rect x="2109" y="452" width="2" height="977" fill="#e6e6e6"/><rect x="2319" y="452" width="2" height="977" fill="#e6e6e6"/><rect x="2440" y="452" width="2" height="977" fill="#e6e6e6"/><line x1="44" y1="485.5" x2="2527" y2="485.5" stroke="#e0e0e0" stroke-width="1"/><line x1="44" y1="519.5" x2="2527" y2="519.5" stroke="#e0e0e0" stroke-width="1"/><line x1="44" y1="553.5" x2="2527" y2="553.5" stroke="#e0e0e0" stroke-width="1"/><line x1="44" y1="586.5" x2="2527" y2="586.5" stroke="#e0e0e0" stroke-width="1"/><line x1="44" y1="620.5" x2="2527" y2="620.5" stroke="#e0e0e0" stroke-width="1"/><line x1="44" y1="654.5" x2="2527" y2="654.5" stroke="#e0e0e0" stroke-width="1"/><line x1="44" y1="688.5" x2="2527" y2="688.5" stroke="#e0e0e0" stroke-width="1"/><line x1="44" y1="722.5" x2="2527" y2="722.5" stroke="#e0e0e0" stroke-width="1"/><line x1="44" y1="756.5" x2="2527" y2="756.5" stroke="#e0e0e0" stroke-width="1"/><line x1="44" y1="789.5" x2="2527" y2="789.5" stroke="#e0e0e0" stroke-width="1"/><line x1="44" y1="823.5" x2="2527" y2="823.5" stroke="#e0e0e0" stroke-width="1"/><line x1="44" y1="857.5" x2="2527" y2="857.5" stroke="#e0e0e0" stroke-width="1"/><line x1="44" y1="891.5" x2="2527" y2="891.5" stroke="#e0e0e0" stroke-width="1"/><line x1="44" y1="925.5" x2="2527" y2="925.5" stroke="#e0e0e0" stroke-width="1"/><line x1="44" y1="959.5" x2="2527" y2="959.5" stroke="#e0e0e0" stroke-width="1"/><line x1="44" y1="992.5" x2="2527" y2="992.5" stroke="#e0e0e0" stroke-width="1"/><line x1="44" y1="1026.5" x2="2527" y2="1026.5" stroke="#e0e0e0" stroke-width="1"/><line x1="44" y1="1060.5" x2="2527" y2="1060.5" stroke="#e0e0e0" stroke-width="1"/><line x1="44" y1="1094.5" x2="2527" y2="1094.5" stroke="#e0e0e0" stroke-width="1"/><line x1="44" y1="1128.5" x2="2527" y2="1128.5" stroke="#e0e0e0" stroke-width="1"/><line x1="44" y1="1162.5" x2="2527" y2="1162.5" stroke="#e0e0e0" stroke-width="1"/><line x1="44" y1="1195.5" x2="2527" y2="1195.5" stroke="#e0e0e0" stroke-width="1"/><line x1="44" y1="1229.5" x2="2527" y2="1229.5" stroke="#e0e0e0" stroke-width="1"/><line x1="44" y1="1263.5" x2="2527" y2="1263.5" stroke="#e0e0e0" stroke-width="1"/><line x1="44" y1="1297.5" x2="2527" y2="1297.5" stroke="#e0e0e0" stroke-width="1"/><line x1="44" y1="1331.5" x2="2527" y2="1331.5" stroke="#e0e0e0" stroke-width="1"/><line x1="44" y1="1365.5" x2="2527" y2="1365.5" stroke="#e0e0e0" stroke-width="1"/><line x1="44" y1="1399.5" x2="2527" y2="1399.5" stroke="#e0e0e0" stroke-width="1"/><rect x="239" y="419" width="2" height="33" fill="#3c3c3c"/><rect x="556" y="419" width="2" height="33" fill="#3c3c3c"/><rect x="993" y="419" width="2" height="33" fill="#3c3c3c"/><rect x="1189" y="419" width="2" height="33" fill="#3c3c3c"/><rect x="1457" y="419" width="2" height="33" fill="#3c3c3c"/><rect x="1783" y="419" width="2" height="33" fill="#3c3c3c"/><rect x="2109" y="419" width="2" height="33" fill="#3c3c3c"/><rect x="2319" y="419" width="2" height="33" fill="#3c3c3c"/><rect x="2440" y="419" width="2" height="33" fill="#3c3c3c"/><line x1="0" y1="485.5" x2="43" y2="485.5" stroke="#3c3c3c" stroke-width="1"/><line x1="0" y1="519.5" x2="43" y2="519.5" stroke="#3c3c3c" stroke-width="1"/><line x1="0" y1="553.5" x2="43" y2="553.5" stroke="#3c3c3c" stroke-width="1"/><line x1="0" y1="586.5" x2="43" y2="586.5" stroke="#3c3c3c" stroke-width="1"/><line x1="0" y1="620.5" x2="43" y2="620.5" stroke="#3c3c3c" stroke-width="1"/><line x1="0" y1="654.5" x2="43" y2="654.5" stroke="#3c3c3c" stroke-width="1"/><line x1="0" y1="688.5" x2="43" y2="688.5" stroke="#3c3c3c" stroke-width="1"/><line x1="0" y1="722.5" x2="43" y2="722.5" stroke="#3c3c3c" stroke-width="1"/><line x1="0" y1="756.5" x2="43" y2="756.5" stroke="#3c3c3c" stroke-width="1"/><line x1="0" y1="789.5" x2="43" y2="789.5" stroke="#3c3c3c" stroke-width="1"/><line x1="0" y1="823.5" x2="43" y2="823.5" stroke="#3c3c3c" stroke-width="1"/><line x1="0" y1="857.5" x2="43" y2="857.5" stroke="#3c3c3c" stroke-width="1"/><line x1="0" y1="891.5" x2="43" y2="891.5" stroke="#3c3c3c" stroke-width="1"/><line x1="0" y1="925.5" x2="43" y2="925.5" stroke="#3c3c3c" stroke-width="1"/><line x1="0" y1="959.5" x2="43" y2="959.5" stroke="#3c3c3c" stroke-width="1"/><line x1="0" y1="992.5" x2="43" y2="992.5" stroke="#3c3c3c" stroke-width="1"/><line x1="0" y1="1026.5" x2="43" y2="1026.5" stroke="#3c3c3c" stroke-width="1"/><line x1="0" y1="1060.5" x2="43" y2="1060.5" stroke="#3c3c3c" stroke-width="1"/><line x1="0" y1="1094.5" x2="43" y2="1094.5" stroke="#3c3c3c" stroke-width="1"/><line x1="0" y1="1128.5" x2="43" y2="1128.5" stroke="#3c3c3c" stroke-width="1"/><line x1="0" y1="1162.5" x2="43" y2="1162.5" stroke="#3c3c3c" stroke-width="1"/><line x1="0" y1="1195.5" x2="43" y2="1195.5" stroke="#3c3c3c" stroke-width="1"/><line x1="0" y1="1229.5" x2="43" y2="1229.5" stroke="#3c3c3c" stroke-width="1"/><line x1="0" y1="1263.5" x2="43" y2="1263.5" stroke="#3c3c3c" stroke-width="1"/><line x1="0" y1="1297.5" x2="43" y2="1297.5" stroke="#3c3c3c" stroke-width="1"/><line x1="0" y1="1331.5" x2="43" y2="1331.5" stroke="#3c3c3c" stroke-width="1"/><line x1="0" y1="1365.5" x2="43" y2="1365.5" stroke="#3c3c3c" stroke-width="1"/><line x1="0" y1="1399.5" x2="43" y2="1399.5" stroke="#3c3c3c" stroke-width="1"/><line x1="0" y1="451.5" x2="44" y2="451.5" stroke="#3c3c3c" stroke-width="1"/><rect x="42" y="419" width="2" height="33" fill="#3c3c3c"/><polygon points="15,449 41,449 41,423" fill="#6b6b6b"/></svg><div class="r" style="left:994px;top:419px;width:197px;height:32px;background:#6a6a6a;border-left:1px solid #7a7a7a;border-right:1px solid #7a7a7a;box-sizing:border-box"></div><div class="r" style="left:994px;top:450px;width:197px;height:2px;background:#1e6e3e"></div><div class="r" style="left:0;top:486px;width:44px;height:34px;background:#6a6a6a"></div><div class="r" style="left:42px;top:486px;width:2px;height:34px;background:#1e6e3e"></div><div class="t" style="left:134.20px;top:421.20px;font-size:23px;line-height:30px;color:#e6e6e6;">A</div><div class="t" style="left:390.36px;top:421.20px;font-size:23px;line-height:30px;color:#e6e6e6;">B</div><div class="t" style="left:767.05px;top:421.20px;font-size:23px;line-height:30px;color:#e6e6e6;">C</div><div class="t" style="left:1083.57px;top:421.20px;font-size:23px;line-height:30px;color:#e6e6e6;">D</div><div class="t" style="left:1316.14px;top:421.20px;font-size:23px;line-height:30px;color:#e6e6e6;">E</div><div class="t" style="left:1613.47px;top:421.20px;font-size:23px;line-height:30px;color:#e6e6e6;">F</div><div class="t" style="left:1938.12px;top:421.20px;font-size:23px;line-height:30px;color:#e6e6e6;">G</div><div class="t" style="left:2206.46px;top:421.20px;font-size:23px;line-height:30px;color:#e6e6e6;">H</div><div class="t" style="left:2377.28px;top:421.20px;font-size:23px;line-height:30px;color:#e6e6e6;">I</div><div class="t" style="left:2495.88px;top:421.20px;font-size:23px;line-height:30px;color:#e6e6e6;">J</div><div class="t" style="left:13.57px;top:455.24px;font-size:23px;line-height:30px;color:#e6e6e6;">1</div><div class="t" style="left:13.86px;top:489.08px;font-size:23px;line-height:30px;color:#e6e6e6;">2</div><div class="t" style="left:13.98px;top:522.92px;font-size:23px;line-height:30px;color:#e6e6e6;">3</div><div class="t" style="left:13.97px;top:556.76px;font-size:23px;line-height:30px;color:#e6e6e6;">4</div><div class="t" style="left:13.92px;top:590.60px;font-size:23px;line-height:30px;color:#e6e6e6;">5</div><div class="t" style="left:13.80px;top:624.44px;font-size:23px;line-height:30px;color:#e6e6e6;">6</div><div class="t" style="left:13.86px;top:658.28px;font-size:23px;line-height:30px;color:#e6e6e6;">7</div><div class="t" style="left:13.92px;top:692.12px;font-size:23px;line-height:30px;color:#e6e6e6;">8</div><div class="t" style="left:13.92px;top:725.96px;font-size:23px;line-height:30px;color:#e6e6e6;">9</div><div class="t" style="left:7.55px;top:759.80px;font-size:23px;line-height:30px;color:#e6e6e6;transform:scaleX(1.0174);transform-origin:0 0;">10</div><div class="t" style="left:8.52px;top:793.64px;font-size:23px;line-height:30px;color:#e6e6e6;transform:scaleX(1.0190);transform-origin:0 0;">11</div><div class="t" style="left:7.66px;top:827.48px;font-size:23px;line-height:30px;color:#e6e6e6;transform:scaleX(1.0176);transform-origin:0 0;">12</div><div class="t" style="left:7.60px;top:861.32px;font-size:23px;line-height:30px;color:#e6e6e6;transform:scaleX(1.0175);transform-origin:0 0;">13</div><div class="t" style="left:7.43px;top:895.16px;font-size:23px;line-height:30px;color:#e6e6e6;transform:scaleX(1.0172);transform-origin:0 0;">14</div><div class="t" style="left:7.60px;top:929.00px;font-size:23px;line-height:30px;color:#e6e6e6;transform:scaleX(1.0175);transform-origin:0 0;">15</div><div class="t" style="left:7.60px;top:962.84px;font-size:23px;line-height:30px;color:#e6e6e6;transform:scaleX(1.0175);transform-origin:0 0;">16</div><div class="t" style="left:7.66px;top:996.68px;font-size:23px;line-height:30px;color:#e6e6e6;transform:scaleX(1.0176);transform-origin:0 0;">17</div><div class="t" style="left:7.60px;top:1030.52px;font-size:23px;line-height:30px;color:#e6e6e6;transform:scaleX(1.0175);transform-origin:0 0;">18</div><div class="t" style="left:7.66px;top:1064.36px;font-size:23px;line-height:30px;color:#e6e6e6;transform:scaleX(1.0176);transform-origin:0 0;">19</div><div class="t" style="left:7.84px;top:1098.20px;font-size:23px;line-height:30px;color:#e6e6e6;transform:scaleX(1.0170);transform-origin:0 0;">20</div><div class="t" style="left:7.96px;top:1132.04px;font-size:23px;line-height:30px;color:#e6e6e6;transform:scaleX(1.0171);transform-origin:0 0;">21</div><div class="t" style="left:7.96px;top:1165.88px;font-size:23px;line-height:30px;color:#e6e6e6;transform:scaleX(1.0171);transform-origin:0 0;">22</div><div class="t" style="left:7.90px;top:1199.72px;font-size:23px;line-height:30px;color:#e6e6e6;transform:scaleX(1.0171);transform-origin:0 0;">23</div><div class="t" style="left:7.73px;top:1233.56px;font-size:23px;line-height:30px;color:#e6e6e6;transform:scaleX(1.0168);transform-origin:0 0;">24</div><div class="t" style="left:7.90px;top:1267.40px;font-size:23px;line-height:30px;color:#e6e6e6;transform:scaleX(1.0171);transform-origin:0 0;">25</div><div class="t" style="left:7.90px;top:1301.24px;font-size:23px;line-height:30px;color:#e6e6e6;transform:scaleX(1.0171);transform-origin:0 0;">26</div><div class="t" style="left:7.96px;top:1335.08px;font-size:23px;line-height:30px;color:#e6e6e6;transform:scaleX(1.0171);transform-origin:0 0;">27</div><div class="t" style="left:7.90px;top:1368.92px;font-size:23px;line-height:30px;color:#e6e6e6;transform:scaleX(1.0171);transform-origin:0 0;">28</div><div class="t" style="left:7.96px;top:1402.76px;font-size:23px;line-height:30px;color:#e6e6e6;transform:scaleX(1.0171);transform-origin:0 0;">29</div><div class="t" style="left:46.65px;top:453.84px;font-size:24px;line-height:31px;color:#000;font-weight:bold;transform:scaleX(1.0300);transform-origin:0 0;">Mã nhân viên</div><div class="t" style="left:243.75px;top:453.84px;font-size:24px;line-height:31px;color:#000;font-weight:bold;transform:scaleX(1.0300);transform-origin:0 0;">Nhân viên</div><div class="t" style="left:559.65px;top:453.84px;font-size:24px;line-height:31px;color:#000;font-weight:bold;transform:scaleX(1.0300);transform-origin:0 0;">Email</div><div class="t" style="left:996.65px;top:453.84px;font-size:24px;line-height:31px;color:#000;font-weight:bold;transform:scaleX(1.0300);transform-origin:0 0;">Mẫu hợp đồng</div><div class="t" style="left:1193.19px;top:453.84px;font-size:24px;line-height:31px;color:#000;font-weight:bold;transform:scaleX(1.0300);transform-origin:0 0;">Thời hạn hợp đồng</div><div class="t" style="left:1460.65px;top:453.84px;font-size:24px;line-height:31px;color:#000;font-weight:bold;transform:scaleX(1.0300);transform-origin:0 0;">Ngày bắt đầu hợp đồng</div><div class="t" style="left:1786.65px;top:453.84px;font-size:24px;line-height:31px;color:#000;font-weight:bold;transform:scaleX(1.0300);transform-origin:0 0;">Ngày ký trên hợp đồng</div><div class="t" style="left:2114.49px;top:453.84px;font-size:24px;line-height:31px;color:#000;font-weight:bold;transform:scaleX(1.0300);transform-origin:0 0;">Trạng thái ký</div><div class="t" style="left:46.69px;top:487.68px;font-size:24px;line-height:31px;color:#000;transform:scaleX(1.0080);transform-origin:0 0;">-</div><div class="t" style="left:243.78px;top:487.68px;font-size:24px;line-height:31px;color:#000;transform:scaleX(1.0080);transform-origin:0 0;">Mai Thị Lý</div><div class="t" style="left:559.69px;top:487.68px;font-size:24px;line-height:31px;color:#000;transform:scaleX(1.0080);transform-origin:0 0;">haily021199@gmail.com</div><div class="t" style="left:46.69px;top:521.52px;font-size:24px;line-height:31px;color:#000;transform:scaleX(1.0080);transform-origin:0 0;">-</div><div class="t" style="left:243.78px;top:521.52px;font-size:24px;line-height:31px;color:#000;transform:scaleX(1.0080);transform-origin:0 0;">Nguyễn Thị Hà</div><div class="t" style="left:559.69px;top:521.52px;font-size:24px;line-height:31px;color:#000;transform:scaleX(1.0080);transform-origin:0 0;">nguyenthiha220391@gmail.com</div><div class="t" style="left:46.69px;top:555.36px;font-size:24px;line-height:31px;color:#000;transform:scaleX(1.0080);transform-origin:0 0;">-</div><div class="t" style="left:243.78px;top:555.36px;font-size:24px;line-height:31px;color:#000;transform:scaleX(1.0080);transform-origin:0 0;">Nguyễn Thị Hằng Nga</div><div class="t" style="left:559.69px;top:555.36px;font-size:24px;line-height:31px;color:#000;transform:scaleX(1.0080);transform-origin:0 0;">hangkhosi20@gmail.com</div><div class="t" style="left:46.69px;top:589.20px;font-size:24px;line-height:31px;color:#000;transform:scaleX(1.0080);transform-origin:0 0;">-</div><div class="t" style="left:243.78px;top:589.20px;font-size:24px;line-height:31px;color:#000;transform:scaleX(1.0080);transform-origin:0 0;">Nguyễn Thị Phương Xuân</div><div class="t" style="left:559.69px;top:589.20px;font-size:24px;line-height:31px;color:#000;transform:scaleX(1.0080);transform-origin:0 0;">phuongxuann1410@gmail.com</div><div class="t" style="left:46.69px;top:623.04px;font-size:24px;line-height:31px;color:#000;transform:scaleX(1.0080);transform-origin:0 0;">-</div><div class="t" style="left:243.78px;top:623.04px;font-size:24px;line-height:31px;color:#000;transform:scaleX(1.0080);transform-origin:0 0;">Nguyễn Thị Tâm</div><div class="t" style="left:559.70px;top:623.04px;font-size:24px;line-height:31px;color:#000;transform:scaleX(1.0080);transform-origin:0 0;">tamhoi96@gmail.com</div><div class="t" style="left:46.69px;top:656.88px;font-size:24px;line-height:31px;color:#000;transform:scaleX(1.0080);transform-origin:0 0;">-</div><div class="t" style="left:243.78px;top:656.88px;font-size:24px;line-height:31px;color:#000;transform:scaleX(1.0080);transform-origin:0 0;">Nguyễn Thị Yến</div><div class="t" style="left:559.70px;top:656.88px;font-size:24px;line-height:31px;color:#000;transform:scaleX(1.0080);transform-origin:0 0;">yenlich200487@gmail.com</div><div class="t" style="left:46.69px;top:690.72px;font-size:24px;line-height:31px;color:#000;transform:scaleX(1.0080);transform-origin:0 0;">-</div><div class="t" style="left:243.78px;top:690.72px;font-size:24px;line-height:31px;color:#000;transform:scaleX(1.0080);transform-origin:0 0;">Nguyễn Văn Nam</div><div class="t" style="left:559.69px;top:690.72px;font-size:24px;line-height:31px;color:#000;transform:scaleX(1.0080);transform-origin:0 0;">nam604242@gmail.com</div><div class="t" style="left:46.69px;top:724.56px;font-size:24px;line-height:31px;color:#000;transform:scaleX(1.0080);transform-origin:0 0;">-</div><div class="t" style="left:243.78px;top:724.56px;font-size:24px;line-height:31px;color:#000;transform:scaleX(1.0080);transform-origin:0 0;">Nguyễn Văn Tú</div><div class="t" style="left:559.69px;top:724.56px;font-size:24px;line-height:31px;color:#000;transform:scaleX(1.0080);transform-origin:0 0;">nguyentu962000@gmail.com</div><div class="t" style="left:46.69px;top:758.40px;font-size:24px;line-height:31px;color:#000;transform:scaleX(1.0080);transform-origin:0 0;">-</div><div class="t" style="left:243.80px;top:758.40px;font-size:24px;line-height:31px;color:#000;transform:scaleX(1.0080);transform-origin:0 0;">Trần Quốc Anh</div><div class="t" style="left:559.69px;top:758.40px;font-size:24px;line-height:31px;color:#000;transform:scaleX(1.0080);transform-origin:0 0;">quoctrym89@gmail.com</div><div class="t" style="left:46.69px;top:792.24px;font-size:24px;line-height:31px;color:#000;transform:scaleX(1.0080);transform-origin:0 0;">-</div><div class="t" style="left:243.80px;top:792.24px;font-size:24px;line-height:31px;color:#000;transform:scaleX(1.0080);transform-origin:0 0;">Trần Thị Bích Hà</div><div class="t" style="left:559.70px;top:792.24px;font-size:24px;line-height:31px;color:#000;transform:scaleX(1.0080);transform-origin:0 0;">tranthibichha21012004@gmail.com</div><div class="t" style="left:46.69px;top:826.08px;font-size:24px;line-height:31px;color:#000;transform:scaleX(1.0080);transform-origin:0 0;">-</div><div class="t" style="left:243.80px;top:826.08px;font-size:24px;line-height:31px;color:#000;transform:scaleX(1.0080);transform-origin:0 0;">Đặng Văn Anh</div><div class="t" style="left:559.69px;top:826.08px;font-size:24px;line-height:31px;color:#000;transform:scaleX(1.0080);transform-origin:0 0;">dangvananh010998@gmail.com</div><div class="t" style="left:46.69px;top:859.92px;font-size:24px;line-height:31px;color:#000;transform:scaleX(1.0080);transform-origin:0 0;">-</div><div class="t" style="left:243.80px;top:859.92px;font-size:24px;line-height:31px;color:#000;transform:scaleX(1.0080);transform-origin:0 0;">Đặng Văn Hổ</div><div class="t" style="left:559.69px;top:859.92px;font-size:24px;line-height:31px;color:#000;transform:scaleX(1.0080);transform-origin:0 0;">dangvanhoo96@gmail.com</div><div class="t" style="left:46.69px;top:893.76px;font-size:24px;line-height:31px;color:#000;transform:scaleX(1.0080);transform-origin:0 0;">-</div><div class="t" style="left:243.80px;top:893.76px;font-size:24px;line-height:31px;color:#000;transform:scaleX(1.0080);transform-origin:0 0;">Đỗ Trí Dũng</div><div class="t" style="left:559.69px;top:893.76px;font-size:24px;line-height:31px;color:#000;transform:scaleX(1.0080);transform-origin:0 0;">dotridungvn@gmail.com</div><div class="t" style="left:46.68px;top:927.60px;font-size:24px;line-height:31px;color:#000;transform:scaleX(1.0080);transform-origin:0 0;">DEMO</div><div class="t" style="left:243.78px;top:927.60px;font-size:24px;line-height:31px;color:#000;transform:scaleX(1.0080);transform-origin:0 0;">Nhân viên</div><div class="t" style="left:559.69px;top:927.60px;font-size:24px;line-height:31px;color:#000;transform:scaleX(1.0080);transform-origin:0 0;">honguyen.287@hrmdemo.com</div><div class="r" style="left:994px;top:486px;width:196px;height:34px;overflow:hidden"><div class="r" style="left:-994px;top:-486px"><div class="t" style="left:996.68px;top:487.68px;font-size:24px;line-height:31px;color:#000;transform:scaleX(1.0080);transform-origin:0 0;">Mẫu hợp đồng lao động bán thời gian</div></div></div><div class="t" style="left:1440.44px;top:487.68px;font-size:24px;line-height:31px;color:#000;">5</div><div class="t" style="left:1460.69px;top:487.68px;font-size:24px;line-height:31px;color:#000;transform:scaleX(1.0080);transform-origin:0 0;">14/10/2026</div><div class="t" style="left:1786.69px;top:487.68px;font-size:24px;line-height:31px;color:#000;transform:scaleX(1.0080);transform-origin:0 0;">13/10/2026</div><div class="t" style="left:2114.50px;top:487.68px;font-size:24px;line-height:31px;color:#000;transform:scaleX(1.0080);transform-origin:0 0;">Đã ký</div><svg class="r" style="left:1447px;top:452px" width="11" height="11"><polygon points="0,0 11,0 11,10.5" fill="#f00c18"/></svg><svg class="r" style="left:1773px;top:452px" width="11" height="11"><polygon points="0,0 11,0 11,10.5" fill="#f00c18"/></svg><svg class="r" style="left:2099px;top:452px" width="11" height="11"><polygon points="0,0 11,0 11,10.5" fill="#f00c18"/></svg><div class="r" style="left:992px;top:484px;width:200px;height:37px;border:2px solid #1e6e3e;box-sizing:border-box"></div><div class="r" style="left:1186px;top:516px;width:7px;height:6px;background:#1e6e3e"></div><div class="r" style="left:1191px;top:488px;width:30px;height:30px;background:#f0f0f0;border:1px solid #adadad;box-sizing:border-box"></div><svg class="r" style="left:1199px;top:500px" width="12" height="7"><polygon points="0,0 12,0 6,6" fill="#6d6d6d"/></svg><div class="r" style="left:994px;top:519px;width:227px;height:136px;background:#fff;border:1px solid #3c3c3c;box-sizing:border-box;overflow:hidden"><div class="r" style="left:0;top:1px;width:224px;height:26px;background:#0078d7"></div></div><div class="r" style="left:995px;top:520px;width:224px;height:134px;overflow:hidden"><div class="r" style="left:-995px;top:-520px"><div class="t" style="left:998.24px;top:524.50px;font-size:17px;line-height:22px;color:#fff;transform:scaleX(1.1046);transform-origin:0 0;">Mẫu hợp đồng lao động bán thời gian</div><div class="t" style="left:998.24px;top:551.80px;font-size:17px;line-height:22px;color:#000;transform:scaleX(1.1046);transform-origin:0 0;">Mẫu hợp đồng lao động xác định</div><div class="t" style="left:998.24px;top:578.60px;font-size:17px;line-height:22px;color:#000;transform:scaleX(1.1046);transform-origin:0 0;">Mẫu hợp đồng lao động kế toán</div><div class="t" style="left:998.24px;top:605.00px;font-size:17px;line-height:22px;color:#000;transform:scaleX(1.1046);transform-origin:0 0;">Mẫu hợp đồng thử việc</div><div class="t" style="left:998.24px;top:631.30px;font-size:17px;line-height:22px;color:#000;transform:scaleX(1.1046);transform-origin:0 0;">Mẫu hợp đồng lao động không xác định</div></div></div><div class="r" style="left:5px;top:294px;width:180px;height:39px;background:#363636;border:1px solid #424242;box-sizing:border-box"></div><div class="t" style="left:10.61px;top:298.90px;font-size:24px;line-height:31px;color:#f0f0f0;transform:scaleX(0.9819);transform-origin:0 0;">D2</div><svg class="r" style="left:160px;top:308px" width="15" height="8"><polygon points="0,0 14,0 7,7" fill="#e0e0e0"/></svg><svg class="r" style="left:207px;top:302px" width="10" height="24"><rect x="2.8" y="2.6" width="4" height="4" fill="#e6e6e6"/><rect x="2.8" y="9.8" width="4" height="4" fill="#e6e6e6"/><rect x="2.8" y="16.9" width="4" height="4" fill="#e6e6e6"/></svg><div class="r" style="left:239px;top:294px;width:194px;height:39px;background:#363636;border:1px solid #3c3c3c;box-sizing:border-box"></div><svg class="r" style="left:258px;top:302px" width="28" height="24"><path d="M4.5 20.5 C9 15 15 9 23.5 4 M5.5 5.5 C10 10 15 15 19.5 20.5" stroke="#8a8a8a" stroke-width="3" fill="none" stroke-linecap="round"/></svg><svg class="r" style="left:320px;top:302px" width="30" height="24"><path d="M6 13.5 L12.5 19.5 L26 4.5" stroke="#8a8a8a" stroke-width="3.6" fill="none" stroke-linecap="round" stroke-linejoin="round"/></svg><div class="t" style="left:385px;top:292px;font-family:'Liberation Serif',serif;font-style:italic;font-size:31px;line-height:36px;color:#e6e6e6;left:388px">fx</div><div class="r" style="left:438px;top:294px;width:2114px;height:107px;background:#393939"></div><div class="t" style="left:456.27px;top:298.90px;font-size:24px;line-height:31px;color:#f0f0f0;">Mẫu hợp đồng lao động bán thời gian</div><svg class="r" style="left:2527px;top:305px" width="20" height="14"><path d="M2 11 L10 3 L18 11" stroke="#f0f0f0" stroke-width="3" fill="none"/></svg><div class="r" style="left:2527px;top:419px;width:33px;height:1010px;background:#262626"></div><div class="r" style="left:2529px;top:448px;width:29px;height:953px;background:#0b0b0b"></div><div class="r" style="left:2529px;top:420px;width:29px;height:28px;background:#363636;border:2px solid #6a6a6a;box-sizing:border-box"></div><div class="r" style="left:2529px;top:450.5px;width:29px;height:265px;background:#373737;border:2px solid #6a6a6a;box-sizing:border-box"></div><div class="r" style="left:2529px;top:1401px;width:29px;height:29px;background:#383838;border:2px solid #6a6a6a;box-sizing:border-box"></div><svg class="r" style="left:2536px;top:427px" width="15" height="10"><polygon points="0.5,9 14,9 7.25,2" fill="#f4f4f4"/></svg><svg class="r" style="left:2536px;top:1412px" width="15" height="10"><polygon points="0.5,0.5 14,0.5 7.25,8" fill="#f4f4f4"/></svg><div class="r" style="left:0;top:1429px;width:2560px;height:47px;background:#262626"></div><div class="r" style="left:0;top:1475px;width:2560px;height:2px;background:#3c3c3c"></div><svg class="r" style="left:28px;top:1443px" width="60" height="17"><polygon points="10,1 10,15 2,8" fill="#bdbdbd"/><polygon points="48,1 48,15 56,8" fill="#bdbdbd"/></svg><div class="r" style="left:150px;top:1429px;width:339px;height:43px;background:#fff"></div><div class="r" style="left:150px;top:1469px;width:339px;height:3px;background:#1e6e3e"></div><div class="t" style="left:160.35px;top:1438.20px;font-size:24px;line-height:31px;color:#1e6e3e;font-weight:bold;transform:scaleX(0.9913);transform-origin:0 0;">Danh sách import hợp đồng</div><div class="t" style="left:502.83px;top:1439.30px;font-size:24px;line-height:31px;color:#f0f0f0;transform:scaleX(1.0241);transform-origin:0 0;">Mẫu hợp đồng</div><div class="r" style="left:676px;top:1432px;width:2px;height:39px;background:#707070"></div><svg class="r" style="left:731px;top:1437px" width="32" height="32"><circle cx="16" cy="15.5" r="13.3" stroke="#f0f0f0" stroke-width="2.6" fill="none"/><path d="M16 8.5 V22.5 M9 15.5 H23" stroke="#f0f0f0" stroke-width="4"/></svg><svg class="r" style="left:1534px;top:1441px" width="8" height="22"><rect x="2" y="2" width="4" height="4" fill="#f4f4f4"/><rect x="2" y="9" width="4" height="4" fill="#f4f4f4"/><rect x="2" y="16" width="4" height="4" fill="#f4f4f4"/></svg><div class="r" style="left:1562px;top:1437px;width:966px;height:29px;background:#0b0b0b"></div><div class="r" style="left:1562px;top:1436.7px;width:29px;height:29.3px;background:#353535;border:2px solid #6a6a6a;box-sizing:border-box"></div><div class="r" style="left:1589px;top:1436.7px;width:819px;height:29.3px;background:#373737;border:2px solid #6a6a6a;box-sizing:border-box"></div><div class="r" style="left:2499px;top:1437px;width:29px;height:29px;background:#383838;border:2px solid #6a6a6a;box-sizing:border-box"></div><svg class="r" style="left:1571px;top:1444px" width="10" height="15"><polygon points="9,0.3 9,14 1,7.15" fill="#f4f4f4"/></svg><svg class="r" style="left:2509px;top:1444px" width="10" height="15"><polygon points="0.7,0.3 0.7,14 8.7,7.15" fill="#f4f4f4"/></svg><div class="r" style="left:0;top:1476px;width:2560px;height:31px;background:#262626"></div><div class="t" style="left:16.08px;top:1485.20px;font-size:18px;line-height:23px;color:#e6e6e6;transform:scaleX(0.9885);transform-origin:0 0;">Ready</div><svg class="r" style="left:102px;top:1480px" width="32" height="27"><path d="M110.5 4.5 A10.6 10.6 0 1 0 113.2 25.6" transform="translate(-100 0)" stroke="#ececec" stroke-width="1.7" fill="none" stroke-dasharray="4.6 2.6"/><path d="M13.8 4 V14" stroke="#ececec" stroke-width="1.6"/><polygon points="9.8,13 17.8,13 13.8,17.5" fill="#ececec"/><path d="M18.5 15.5 H22" stroke="#ececec" stroke-width="1.6"/><polygon points="21,11.5 25,15.5 21,19.5" fill="#ececec"/><path d="M16.3 23.5 L20 27 L27.2 19" stroke="#ececec" stroke-width="1.9" fill="none"/></svg><div class="t" style="left:133.30px;top:1485.20px;font-size:18px;line-height:23px;color:#e6e6e6;transform:scaleX(1.0271);transform-origin:0 0;">Accessibility: Good to go</div><div class="r" style="left:2030px;top:1476px;width:72px;height:31px;background:#4a4a4a"></div><svg class="r" style="left:2052px;top:1483px" width="26" height="24"><rect x="2.5" y="2.5" width="21" height="24" stroke="#e6e6e6" stroke-width="1.6" fill="none"/><path d="M9.5 2.5 V26 M16.5 2.5 V26 M2.5 9.5 H23.5 M2.5 16.5 H23.5" stroke="#e6e6e6" stroke-width="1.4" fill="none"/></svg><svg class="r" style="left:2124px;top:1483px" width="28" height="24"><rect x="2" y="2" width="23" height="22" stroke="#e6e6e6" stroke-width="1.6" fill="none"/><path d="M8 8 H19 M8 12 H19 M8 16 H19 M8 20 H19" stroke="#e6e6e6" stroke-width="1.6"/></svg><svg class="r" style="left:2195px;top:1483px" width="28" height="24"><rect x="2" y="2" width="23" height="22" stroke="#e6e6e6" stroke-width="1.6" fill="none"/><rect x="4" y="3" width="7" height="12" fill="#e6e6e6"/><rect x="13" y="3" width="7" height="9" fill="#e6e6e6"/></svg><div class="r" style="left:2255px;top:1494px;width:13px;height:2px;background:#bbb"></div><div class="r" style="left:2278px;top:1494px;width:177px;height:2px;background:#ddd"></div><div class="r" style="left:2362px;top:1485px;width:9px;height:22px;background:#f0f0f0"></div><div class="r" style="left:2464px;top:1494px;width:14px;height:2px;background:#ddd"></div><div class="r" style="left:2470px;top:1488px;width:2px;height:14px;background:#ddd"></div><div class="t" style="left:2501.19px;top:1484.00px;font-size:22px;line-height:29px;color:#e6e6e6;transform:scaleX(0.7959);transform-origin:0 0;">100%</div>
</body></html>
